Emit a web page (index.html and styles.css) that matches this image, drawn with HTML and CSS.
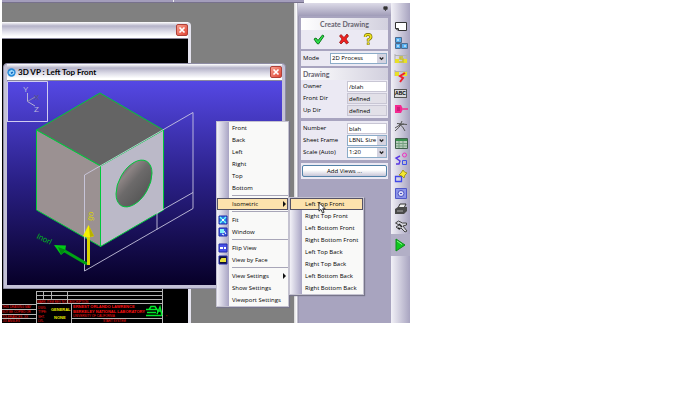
FILE: index.html
```
<!DOCTYPE html>
<html lang="en">
<head>
  <meta charset="UTF-8">
  <title>Create Drawing</title>
  <link rel="stylesheet" href="styles.css">
</head>
<body>
  <div class="app">
    <div class="top-strip"><span></span></div>

    <div class="main">
      <div class="desktop">
        <!-- 2D drawing window -->
        <section class="window sheet-window">
          <header class="titlebar">
            <button class="close" aria-label="Close drawing"><svg viewBox="0 0 12 12"><path d="M3 3l6 6M9 3l-6 6"/></svg></button>
          </header>
          <div class="sheet">
            <svg class="title-block" viewBox="2 288 186 35">
              <g stroke="#b4b4b4" fill="none">
                <path d="M36 291.500H163M36 295.500H163M36 299.500H163M36 303.500H163M2 304.500H36M2 309.500H36M2 314.500H36M2 318.500H36M71 318.500H163"/>
                <path d="M36.500 291V323M43.500 291v9M51.500 291v9M67.500 291v12M71.500 304v19M162.500 288v35"/>
              </g>
              <g class="red bold">
                <text x="73" y="308">ERNEST ORLANDO LAWRENCE</text>
                <text x="73" y="313">BERKELEY NATIONAL LABORATORY</text>
              </g>
              <g class="red">
                <text x="37" y="303">MARK ITEM REV NO. DESCRIPTION</text>
                <text x="2" y="308">THIS DRAWING MAY</text>
                <text x="2" y="313">NOT BE COPIED OR</text>
                <text x="2" y="318">TOLERANCES .XX</text>
                <text x="2" y="322">.XX ANGLES</text>
                <text x="38" y="309">DWG.</text>
                <text x="38" y="313">TYPE:</text>
                <text x="38" y="318">SHT.</text>
                <text x="38" y="322">LVL.</text>
                <text x="73" y="317">UNIVERSITY OF CALIFORNIA</text>
                <text x="103" y="322">START SYSTEM</text>
                <text x="166" y="318">*</text>
              </g>
              <g class="yellow bold">
                <text x="51" y="311">GENERAL</text>
                <text x="54" y="319">NONE</text>
              </g>
              <g stroke="#00e82a" fill="none">
                <path d="M146 315.500h16M147 312.500h9M149 309.500h8l-2-3h-4zM146 309.500h5M157 314l3-7 2 8M157 311h4" stroke-width="1.500"/>
              </g>
            </svg>
          </div>
        </section>

        <!-- 3D viewport window -->
        <section class="window view-window">
          <header class="titlebar">
            <svg class="logo" viewBox="0 0 10 10"><circle cx="5" cy="5" r="4.600" fill="#2388d8"/><path d="M2 4l3-2 3 1.500v3L5 8 2 6.500z" fill="#9ed8fa"/><path d="M4 5l2-1 1 1-2 2z" fill="#1668c0"/></svg>
            <h1>3D VP : Left Top Front</h1>
            <button class="close" aria-label="Close viewport"><svg viewBox="0 0 12 12"><path d="M3 3l6 6M9 3l-6 6"/></svg></button>
          </header>
          <svg class="viewport" viewBox="7 81 275 204" preserveAspectRatio="xMinYMin slice">
            <defs>
              <linearGradient id="sky" x1="0" y1="0" x2="0" y2="1">
                <stop offset="0" stop-color="#5548e4"/>
                <stop offset=".5" stop-color="#291f84"/>
                <stop offset="1" stop-color="#070028"/>
              </linearGradient>
              <linearGradient id="bore" x1="0" y1="0" x2=".5" y2="1">
                <stop offset="0" stop-color="#5c5c5c"/>
                <stop offset=".25" stop-color="#8d8484"/>
                <stop offset=".55" stop-color="#6c6a6a"/>
                <stop offset="1" stop-color="#5a5a5a"/>
              </linearGradient>
            </defs>
            <rect x="7" y="81" width="275" height="204" fill="url(#sky)"/>

            <!-- cube -->
            <g stroke="#00c83c" stroke-linejoin="round">
              <path d="M100 93L163.500 130 100.500 166 36.500 130z" fill="#646464"/>
              <path d="M36.500 130L100.500 166V246.500L36.500 210z" fill="#9b9192"/>
              <path d="M163.500 130L100.500 166V246.500L163.500 210z" fill="#bbb9c8"/>
              <circle r="18" transform="matrix(1 -.57 0 1.170 134 183.500)" fill="url(#bore)" vector-effect="non-scaling-stroke"/>
            </g>

            <!-- sheet outline -->
            <path d="M84.500 175L193 112.500V208.500L84.500 271zM193 192.500L157 213V229.500" fill="none" stroke="#cfcde4" stroke-opacity=".85"/>

            <!-- direction arrows -->
            <path d="M87 264L63 250" stroke="#00a414" stroke-width="3"/>
            <path d="M54 245l12 .500-1 6-4 3.500z" fill="#00c816"/>
            <path d="M58 247l8 3-5 4.500z" fill="#008c10"/>
            <path d="M88.500 265V235" stroke="#d8d400" stroke-width="3"/>
            <path d="M88.500 225l5.500 11q-5 2.500-11 0z" fill="#f4f000"/>
            <path d="M89 226l5 10-4 1z" fill="#b8b000"/>
            <text class="dir-label" transform="translate(36 238) rotate(26)" fill="#00b81c">Inorl</text>
            <text class="dir-label" transform="translate(92 221) rotate(-80)" fill="#d8d400">go</text>

            <!-- axis triad -->
            <path d="M7.500 122V81.500H47.500V121.500H7" fill="none" stroke="#d0ccf0"/>
            <path d="M27.500 93V101.500L35 106" fill="none" stroke="#b4b0d8"/>
            <path d="M27.500 101.500L35 97" stroke="#8c8ab0"/>
            <text class="axis" x="23" y="92" fill="#bcb8dc">Y</text>
            <text class="axis" x="34" y="100" fill="#5c5a78">X</text>
            <text class="axis" x="34" y="112" fill="#bcb8dc">Z</text>
          </svg>
        </section>
      </div>

      <aside class="panel">
        <div class="panel-top"><svg viewBox="0 0 6 6"><path d="M1 1h4v3H1zM3 4v2" fill="#333" stroke="#333"/></svg></div>

        <div class="box">
          <h2 class="center">Create Drawing</h2>
          <div class="actions">
            <button aria-label="OK"><svg viewBox="0 0 12 12"><path d="M1 6l2-1 2 2.500L9.500 2 11 3 5.500 11 4 10.500z" fill="#2ee04a" stroke="#0d7a1e"/></svg></button>
            <button aria-label="Cancel"><svg viewBox="0 0 12 12"><path d="M3 1.500l3 3L9 1l1.500 2L8 6l2.500 3.500L8.500 11 6 8 3 11 1.500 9.500 4 6 1.500 3z" fill="#f02020" stroke="#8c0c0c" stroke-width=".700"/></svg></button>
            <button aria-label="Help"><svg viewBox="0 0 12 12"><path d="M3.200 4Q3 1.500 6 1.500T9 4Q9 5.500 6.200 6.800V8.500M6.200 9.500v2.300" fill="none" stroke="#6f6800" stroke-width="2.800"/><path d="M3.200 4Q3 1.500 6 1.500T9 4Q9 5.500 6.200 6.800V8.500M6.200 9.800v1.700" fill="none" stroke="#f0e420" stroke-width="1.600"/></svg></button>
          </div>
        </div>

        <div class="box row mode">
          <label for="mode">Mode</label>
          <span class="combo"><select id="mode"><option>2D Process</option></select><svg viewBox="0 0 10 10"><path d="M3 4l2 2 2-2"/></svg></span>
        </div>

        <div class="box">
          <h2>Drawing</h2>
          <div class="rows">
            <div class="row"><label for="owner">Owner</label><input id="owner" value="/blah"></div>
            <div class="row"><label for="front">Front Dir</label><input id="front" value="defined" readonly></div>
            <div class="row"><label for="up">Up Dir</label><input id="up" value="defined" readonly></div>
          </div>
        </div>

        <div class="box rows numbering">
          <div class="row"><label for="number">Number</label><input id="number" value="blah"></div>
          <div class="row"><label for="frame">Sheet Frame</label><span class="combo"><select id="frame"><option>LBNL Size</option></select><svg viewBox="0 0 10 10"><path d="M3 4l2 2 2-2"/></svg></span></div>
          <div class="row"><label for="scale">Scale (Auto)</label><span class="combo"><select id="scale"><option>1:20</option></select><svg viewBox="0 0 10 10"><path d="M3 4l2 2 2-2"/></svg></span></div>
        </div>

        <div class="box add"><button>Add Views ...</button></div>
      </aside>

      <nav class="toolbar">
        <div class="tools">
          <button aria-label="Sheet"><svg viewBox="0 0 14 14"><path d="M1.500 3.500h11v8h-8l-3-2z" fill="#fff" stroke="#333"/><path d="M1.500 9.500h3v2" fill="none" stroke="#333"/></svg></button>
          <button aria-label="Views"><svg viewBox="0 0 14 14"><path d="M1.500 1.500h6v5h-6zM1.500 7.500h5v5h-5zM7.500 7.500h6v5h-6z" fill="#58b0f0" stroke="#4c6c90"/><path d="M3 4h2M3 10h2M10 10h2" stroke="#fff"/></svg></button>
          <button aria-label="Dimension"><svg viewBox="0 0 14 14"><path d="M1 2v9M13 2v9M1 3.500h12" fill="none" stroke="#b0b0b0"/><path d="M1 7h4v4H1zM9 7h4v4H9z" fill="#e8e028"/><path d="M9 5H6v2h3v3H5" fill="none" stroke="#c8c030" stroke-width="1.500"/></svg></button>
          <button aria-label="Edit dimension"><svg viewBox="0 0 14 14"><path d="M1 1v6M13 1v6M1 2.500h12" fill="none" stroke="#b0b0b0"/><path d="M1 3h4v4H1zM9 3h4v4H9z" fill="#e8e028"/><path d="M11 4L6 7l3 2-3 4" fill="none" stroke="#ee2030" stroke-width="2"/></svg></button>
          <button aria-label="Text" class="abc">ABC</button>
          <button aria-label="Label"><svg viewBox="0 0 14 14"><path d="M1 3h6l2 4-2 4H1z" fill="#f42890"/><path d="M9 7h5" stroke="#f42890" stroke-width="1.500"/><path d="M3 6h3M3 8h3" stroke="#a01060"/></svg></button>
          <button aria-label="Curves"><svg viewBox="0 0 14 14"><path d="M1 12Q6 9 8 2M3 4.500l10 1M5 5q4 2 6 7M1 9q5-4 9-4" fill="none" stroke="#555"/></svg></button>
          <button aria-label="Table"><svg viewBox="0 0 14 14"><path d="M1.500 2.500h12v10h-12z" fill="#b8ccbc" stroke="#40604c"/><path d="M2 3h11v2H2z" fill="#38904c"/><path d="M2 7.500h11M2 10h11M5 5v7M9 5v7" stroke="#74a080"/></svg></button>
          <button aria-label="Symbols"><svg viewBox="0 0 14 14"><path d="M6 4L2 6l4 3-1 3H2" fill="none" stroke="#5a38e4" stroke-width="1.400"/><circle cx="10.500" cy="3" r="2" fill="none" stroke="#f030c0"/><path d="M8.500 8.500h4v4h-4z" fill="none" stroke="#4050e8"/></svg></button>
          <button aria-label="Shapes"><svg viewBox="0 0 14 14"><path d="M1.500 7.500h6v5h-6z" fill="none" stroke="#4048e8" stroke-width="1.300"/><path d="M9 1l1.500 2L13 4l-2 2-1 3-2-2-3-1 2-2z" fill="#f4e830" stroke="#a49820"/></svg></button>
          <button aria-label="Part"><svg viewBox="0 0 14 14"><path d="M1.500 2.500h11v10h-11z" fill="#8c94e8" stroke="#5058c8"/><circle cx="7" cy="7.500" r="3" fill="#dcdcf8" stroke="#4850c0"/><path d="M6 7h2v1H6z" fill="#4850c0"/></svg></button>
          <button aria-label="Print"><svg viewBox="0 0 14 14"><path d="M4 6l2-4h6l-2 4z" fill="#eee" stroke="#333"/><path d="M1 7l3-2h9v4l-3 3H1z" fill="#4a4a4a"/><path d="M3 9h6" stroke="#aaa"/></svg></button>
          <button aria-label="Settings"><svg viewBox="0 0 14 14"><path d="M1.500 4l3-2 4 2h4v2L9 7l4 5-2 1-4-4-2 1-3-2 3-2z" fill="#d4d4dc" stroke="#444"/><path d="M5 5l3 3M6 10l-2-1" stroke="#222" stroke-width="1.500"/></svg></button>
        </div>
        <button class="run" aria-label="Run"><svg viewBox="0 0 14 14"><path d="M3 1l9 6-9 6z" fill="#10c820" stroke="#0a8c18"/><path d="M4 3l5 3.500" stroke="#8cf890"/></svg></button>
      </nav>
    </div>

    <!-- View menu -->
    <ul class="menu view-menu">
      <li>Front</li>
      <li>Back</li>
      <li>Left</li>
      <li>Right</li>
      <li>Top</li>
      <li>Bottom</li>
      <li class="sep"></li>
      <li class="active more">Isometric</li>
      <li class="sep"></li>
      <li><svg viewBox="0 0 10 10"><path d="M1 1h8v8H1z" fill="#2a7ce8" stroke="#2028a8"/><path d="M2 2l2 2M8 2L6 4M2 8l2-2M8 8L6 6" stroke="#70fff8" stroke-width="1.400"/><path d="M4 4h2v2H4z" fill="#fff"/></svg>Fit</li>
      <li><svg viewBox="0 0 10 10"><path d="M1 1h8v8H1z" fill="#3858e0" stroke="#2028a8"/><path d="M2 2h4v4H2z" fill="#80f0f8"/><path d="M6 4l2 3M4 7l2 1" stroke="#fff"/></svg>Window</li>
      <li class="sep"></li>
      <li><svg viewBox="0 0 10 10"><path d="M1 1h8v8H1z" fill="#4850e8" stroke="#2028a8"/><path d="M2 4h3v2H2zM6 4h2v2H6z" fill="#fff"/></svg>Flip View</li>
      <li><svg viewBox="0 0 10 10"><path d="M1 1h8v8H1z" fill="#101030" stroke="#2028a8"/><path d="M2 5l1.500-2H8v4H2z" fill="#e8e040"/></svg>View by Face</li>
      <li class="sep"></li>
      <li class="more">View Settings</li>
      <li>Show Settings</li>
      <li>Viewport Settings</li>
    </ul>

    <ul class="menu iso-menu">
      <li class="active">Left Top Front</li>
      <li>Right Top Front</li>
      <li>Left Bottom Front</li>
      <li>Right Bottom Front</li>
      <li>Left Top Back</li>
      <li>Right Top Back</li>
      <li>Left Bottom Back</li>
      <li>Right Bottom Back</li>
    </ul>

    <svg class="cursor" viewBox="0 0 8 12"><path d="M1 .700v8.500l2-1.900L4.500 11l1.600-.700-1.500-3.500h2.700z" fill="#fff" stroke="#111" stroke-width=".800"/></svg>
  </div>
</body>
</html>
```

FILE: styles.css
```
* {
  box-sizing: border-box;
}

body {
  margin: 0 2px;
  background: #fff;
  color: #000;
  font: 6px/12px "Open Sans", "Liberation Sans", sans-serif;
}

h1, h2, ul {
  margin: 0;
  padding: 0;
}

button, input, select {
  font: inherit;
  color: inherit;
  margin: 0;
  padding: 0;
  border-radius: 0;
}

svg {
  display: block;
}

.app {
  position: relative;
  max-width: 408px;
  overflow: hidden;
}

.top-strip {
  display: flex;
  width: 74%;
  height: 3px;
  background: #a39dbb;
  border-bottom: 1px solid #77718c;
}

.top-strip span {
  width: 57%;
  border-right: 1px solid #eee;
}

.main {
  display: grid;
  grid-template-columns: 1fr 97px 19px;
  min-height: 320px;
}

/* Desktop and its windows */
.desktop {
  position: relative;
  background: #808080;
  overflow: hidden;
}

.window {
  position: absolute;
  display: flex;
  flex-direction: column;
  border-radius: 4px 4px 0 0;
  background: #e4e3ee;
}

.sheet-window {
  top: 19px;
  left: 0;
  width: 189px;
  bottom: 0;
  padding-right: 3px;
  border-radius: 0 4px 0 0;
}

.view-window {
  top: 60px;
  left: 1px;
  width: 283px;
  height: 226px;
  padding: 0 3px 3px;
  border: 1px solid #8e8ca4;
  background: #c4c2d6;
}

.titlebar {
  display: flex;
  align-items: center;
  flex: none;
  gap: 2px;
  height: 17px;
  border-bottom: 1px solid #8a889c;
  background: linear-gradient(#fff, #b4b2c8 25%, #e0dfea 60%, #fff 90%);
}

.titlebar h1 {
  font: bold 8px/12px Lato, sans-serif;
}

.logo {
  width: 9px;
  height: 9px;
}

.close {
  width: 12px;
  height: 12px;
  margin-left: auto;
  border: 1px solid #b04038;
  border-radius: 2px;
  background: linear-gradient(135deg, #f8a090, #e04434);
}

.close svg {
  width: 10px;
  height: 10px;
  stroke: #fff;
  stroke-width: 2;
}

.sheet {
  display: flex;
  align-items: flex-end;
  flex: 1;
  background: #000;
}

.title-block {
  width: 186px;
  height: 35px;
}

.title-block text {
  font: 3px "Liberation Sans", sans-serif;
}

.title-block .bold text {
  font: bold 4px "Liberation Sans", sans-serif;
}

.red {
  fill: #ff1010;
}

.yellow {
  fill: #f0f000;
}

.viewport {
  flex: 1;
  width: 100%;
  min-height: 0;
}

.dir-label {
  font: 8px "Liberation Sans", sans-serif;
}

.axis {
  font: 8px "Liberation Sans", sans-serif;
}

/* Create Drawing panel */
.panel {
  display: flex;
  flex-direction: column;
  gap: 2px;
  padding: 0 3px 0 7px;
  background: linear-gradient(90deg, #ddd 1px, #fff 2px, #f4f3f8 3px, #8c8aa0 4px, #a8a4bf 5px);
}

.panel-top {
  display: flex;
  justify-content: flex-end;
  height: 13px;
  margin: 0 -3px 0 -3px;
  padding: 3px 3px 0 0;
  background: linear-gradient(#dddbe8, #a09cb8);
}

.panel-top svg {
  width: 5px;
  height: 5px;
}

.box {
  background: #ebe9f3;
}

h2 {
  padding: 0 2px;
  background: linear-gradient(90deg, #fff, #d2d0de);
  color: #66636f;
  font: bold 7px/12px Lato, sans-serif;
}

.center {
  text-align: center;
}

.actions {
  display: flex;
  justify-content: space-evenly;
  padding: 3px 2px 4px 0;
}

.actions button {
  width: 12px;
  height: 12px;
  border: 0;
  background: none;
}

.rows {
  display: grid;
  gap: 1px;
  padding: 1px 0 2px;
}

.row {
  display: grid;
  grid-template-columns: 42px 1fr;
  gap: 2px;
  align-items: center;
  padding: 0 1px 0 2px;
  line-height: 11px;
}

.mode {
  grid-template-columns: 25px 1fr;
  padding: 2px 1px 2px 2px;
}

.numbering {
  margin-top: 1px;
  padding-top: 2px;
}

input, select {
  width: 100%;
  height: 11px;
  padding: 0 1px;
  border: 1px solid #c8c6d4;
  background: #fff;
  line-height: 9px;
}

input[readonly] {
  background: #e2e0e8;
}

.combo {
  position: relative;
  display: block;
  height: 11px;
}

.combo select {
  display: block;
  appearance: none;
  border-color: #8cacc8;
}

.combo svg {
  position: absolute;
  top: 1px;
  right: 1px;
  width: 9px;
  height: 9px;
  background: #d4d3e0;
  fill: none;
  stroke: #222;
  stroke-width: 1.5;
  pointer-events: none;
}

.add {
  margin-top: 1px;
  padding: 2px 1px;
}

.add button {
  display: block;
  width: 100%;
  height: 12px;
  border: 1px solid #5482a8;
  border-radius: 2px;
  background: linear-gradient(#fff 40%, #c8c6d8);
  line-height: 10px;
}

/* Right toolbar */
.toolbar {
  padding-top: 15px;
  background: linear-gradient(90deg, #f2f1f7, #a8a4c0);
}

.tools {
  display: flex;
  flex-direction: column;
  justify-content: space-between;
  height: 216px;
}

.toolbar button {
  display: grid;
  place-items: center;
  width: 100%;
  height: 16px;
  border: 0;
  background: none;
}

.toolbar svg {
  width: 14px;
  height: 14px;
}

.toolbar .abc {
  width: 13px;
  height: 9px;
  margin: 4px auto 3px 3px;
  border: 1px solid #555;
  background: #d8d8dc;
  font: bold 5px/7px "Liberation Sans", sans-serif;
}

.toolbar .run {
  height: 22px;
  padding-right: 2px;
  background: #b2afc6;
}

/* Menus */
.menu {
  position: absolute;
  list-style: none;
  border: 1px solid #c4c2d0;
  background: linear-gradient(90deg, #f2f1f7, #a8a4c4 12px, #f9f9f8 12px);
  box-shadow: 1px 1px 1px #77758a;
}

.view-menu {
  top: 121px;
  left: 214px;
  width: 73px;
}

.iso-menu {
  top: 197px;
  left: 287px;
  width: 75px;
}

.menu li {
  position: relative;
  height: 12px;
  padding-left: 15px;
  white-space: nowrap;
}

.menu .sep {
  height: 4px;
  margin-left: 15px;
  background: linear-gradient(#a8a6b8, #a8a6b8) 0 1px / 100% 1px no-repeat;
}

.menu .active {
  background: #fde3ad;
  outline: 1px solid #555366;
  outline-offset: -1px;
}

.menu .more::after {
  content: "";
  position: absolute;
  top: 3px;
  right: 2px;
  border: 3px solid transparent;
  border-left-color: #111;
  border-right: 0;
}

.menu li svg {
  position: absolute;
  top: 1px;
  left: 1px;
  width: 10px;
  height: 10px;
}

.cursor {
  position: absolute;
  top: 202px;
  left: 316px;
  width: 8px;
  height: 12px;
}
```
